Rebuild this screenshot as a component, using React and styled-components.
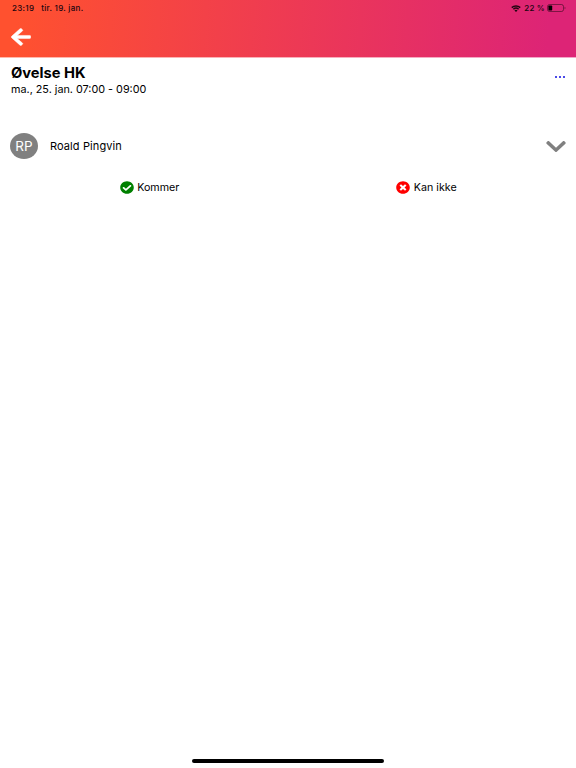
import styled, { createGlobalStyle } from 'styled-components';
import { FaArrowLeft, FaCheckCircle, FaChevronDown, FaTimesCircle } from 'react-icons/fa';

export default function App() {
  return (
    <>
      <GlobalStyle />
      <StyledScreen>
        <StyledHeader>
          <StyledStatusBar>
            <StyledClock>
              <span>23:19</span>
              <span>tir. 19. jan.</span>
            </StyledClock>
            <StyledStatusIcons>
              <WifiIcon />
              <span>22 %</span>
              <BatteryIcon />
            </StyledStatusIcons>
          </StyledStatusBar>
          <StyledBackButton aria-label="Tilbake">
            <FaArrowLeft viewBox="-6 24 460 464" preserveAspectRatio="none" />
          </StyledBackButton>
        </StyledHeader>

        <StyledEvent>
          <div>
            <StyledTitle>Øvelse HK</StyledTitle>
            <StyledDate>ma., 25. jan. 07:00 - 09:00</StyledDate>
          </div>
          <StyledMenuButton aria-label="Meny">
            <i />
            <i />
            <i />
          </StyledMenuButton>
        </StyledEvent>

        <StyledPerson>
          <StyledAvatar>RP</StyledAvatar>
          <StyledName>Roald Pingvin</StyledName>
          <FaChevronDown preserveAspectRatio="none" />
        </StyledPerson>

        <StyledAnswers>
          <StyledAnswer $color="#008000">
            <FaCheckCircle preserveAspectRatio="none" />
            <span>Kommer</span>
          </StyledAnswer>
          <StyledAnswer $color="#ff0000">
            <FaTimesCircle preserveAspectRatio="none" />
            <span>Kan ikke</span>
          </StyledAnswer>
        </StyledAnswers>

        <StyledHomeBar />
      </StyledScreen>
    </>
  );
}

function WifiIcon() {
  return (
    <svg width="10" height="7" viewBox="0 0 20 14" fill="none">
      <path d="M1.5 5.2a12.3 12.3 0 0 1 17 0" stroke="#200510" strokeWidth="3" />
      <path d="M4.8 8.6a7.6 7.6 0 0 1 10.4 0" stroke="#200510" strokeWidth="3" />
      <path d="M10 14 6.9 10.9a4.4 4.4 0 0 1 6.2 0z" fill="#200510" />
    </svg>
  );
}

function BatteryIcon() {
  return (
    <svg width="19" height="8" viewBox="0 0 19 8" fill="none">
      <rect x="0.5" y="0.5" width="16" height="7" rx="2" stroke="#200510" strokeOpacity="0.5" />
      <rect x="1.4" y="1.5" width="3.8" height="5" rx="0.8" fill="#000" />
      <path d="M17.6 2.8c1.2.3 1.2 2.1 0 2.4z" fill="#200510" fillOpacity="0.55" />
    </svg>
  );
}

const GlobalStyle = createGlobalStyle`
  * {
    box-sizing: border-box;
  }

  body {
    margin: 0;
    background: #fff;
    color: #000;
    font-family: Inter, "Liberation Sans", sans-serif;
  }

  button {
    padding: 0;
    border: 0;
    background: none;
  }
`;

const StyledScreen = styled.div`
  display: flex;
  flex-direction: column;
  height: 768px;
`;

const StyledHeader = styled.header`
  height: 58px;
  flex: none;
  border-bottom: 1px solid rgba(255, 255, 255, 0.6);
  background: linear-gradient(94deg, #ff512f 3%, #dd2476 95%) border-box;
`;

const StyledStatusBar = styled.div`
  display: flex;
  justify-content: space-between;
  height: 16px;
  padding: 0 10px 0 12px;
  font-size: 8px;
  font-weight: 500;
  line-height: 16px;
  color: #200510;
`;

const StyledClock = styled.div`
  display: flex;
  gap: 7px;
  letter-spacing: 0.3px;
`;

const StyledStatusIcons = styled.div`
  display: flex;
  align-items: center;
  gap: 2px;

  span {
    margin-left: 1px;
    letter-spacing: 0.2px;
  }
`;

const StyledBackButton = styled.button`
  display: block;
  margin: 12px 0 0 11px;
  color: #fff;

  svg {
    display: block;
    width: 20px;
    height: 18px;
    stroke: currentColor;
    stroke-width: 12px;
  }
`;

const StyledEvent = styled.section`
  display: flex;
  justify-content: space-between;
  align-items: flex-start;
  height: 62px;
  padding: 7px 11px 0;
`;

const StyledTitle = styled.h1`
  margin: 0;
  font-size: 14.7px;
  font-weight: 700;
  line-height: 17px;
`;

const StyledDate = styled.div`
  font-size: 10.8px;
  line-height: 16px;
`;

const StyledMenuButton = styled.button`
  display: flex;
  gap: 2px;
  margin-top: 11px;

  i {
    width: 2px;
    height: 2px;
    background: #4a4ae8;
  }
`;

const StyledPerson = styled.section`
  display: flex;
  align-items: center;
  height: 52px;
  padding: 0 10px;

  > svg {
    width: 20px;
    height: 21px;
    margin-left: auto;
    color: #808080;
  }
`;

const StyledAvatar = styled.div`
  width: 28px;
  height: 26px;
  margin-right: 12px;
  border-radius: 50%;
  background: #808080;
  color: #fff;
  font-size: 13.5px;
  line-height: 26px;
  text-align: center;
`;

const StyledName = styled.span`
  font-size: 11px;
  letter-spacing: 0.1px;
`;

const StyledAnswers = styled.div`
  display: flex;
  padding: 0 11px;
`;

const StyledAnswer = styled.div`
  display: flex;
  flex: 1;
  justify-content: center;
  align-items: center;
  gap: 3.5px;
  height: 31px;
  font-size: 10.7px;

  svg {
    width: 14px;
    height: 13px;
    color: ${({ $color }) => $color};
  }
`;

const StyledHomeBar = styled.div`
  width: 192px;
  height: 4px;
  margin: auto auto 5px;
  border-radius: 2px;
  background: #000;
`;
